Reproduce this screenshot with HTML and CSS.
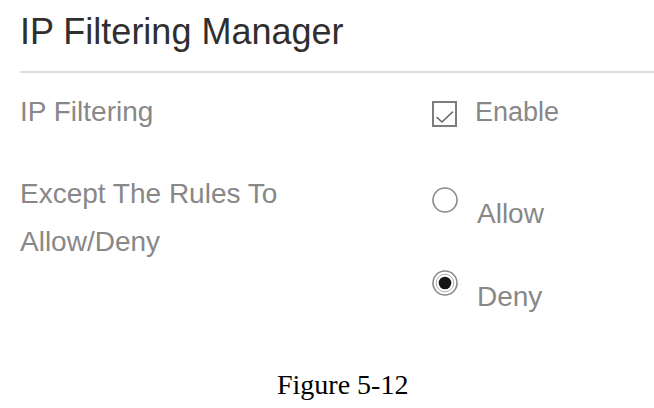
FILE: index.html
```html
<!DOCTYPE html>
<html lang="en">
<head>
<meta charset="utf-8">
<title>IP Filtering Manager</title>
<link rel="stylesheet" href="styles.css">
</head>
<body>
<main class="panel">
  <h1 class="title">IP Filtering Manager</h1>
  <div class="divider"></div>
  <div class="form">
    <div class="label">IP Filtering</div>
    <div class="control check-row">
      <svg class="checkbox" width="25" height="26" viewBox="0 0 25 26" aria-hidden="true">
        <rect x="1" y="1" width="23" height="24" fill="#fff" stroke="#7d7d7d" stroke-width="2"/>
        <path d="M5 16.5 L10 21 L20.5 11" fill="none" stroke="#606060" stroke-width="1.5" stroke-linecap="round" stroke-linejoin="round"/>
      </svg>
      <span class="opt-text">Enable</span>
    </div>

    <div class="label">Except The Rules To<br>Allow/Deny</div>
    <div class="control radio-list">
      <div class="radio-opt">
        <svg class="radio" width="26" height="26" viewBox="0 0 26 26" aria-hidden="true">
          <circle cx="13" cy="13" r="12" fill="#fff" stroke="#8a8a8a" stroke-width="1.6"/>
        </svg>
        <span class="opt-text radio-text">Allow</span>
      </div>
      <div class="radio-opt">
        <svg class="radio" width="26" height="26" viewBox="0 0 26 26" aria-hidden="true">
          <circle cx="13" cy="13" r="12" fill="#fff" stroke="#8a8a8a" stroke-width="1.6"/>
          <circle cx="13" cy="13" r="8.8" fill="none" stroke="#b0b0b0" stroke-width="1"/>
          <circle cx="13" cy="13" r="6.3" fill="#151515"/>
        </svg>
        <span class="opt-text radio-text">Deny</span>
      </div>
    </div>
  </div>
  <p class="caption">Figure 5-12</p>
</main>
</body>
</html>
```

FILE: styles.css
```css
html, body {
  margin: 0;
  padding: 0;
  background: #fff;
}

.panel {
  padding: 10px 0 0 20px;
  font-family: "Liberation Sans", Arial, sans-serif;
}

.title {
  margin: 0;
  font-size: 36px;
  line-height: 44px;
  font-weight: normal;
  color: #2f2f2f;
}

.divider {
  margin-top: 17px;
  height: 2px;
  background: #dddddd;
}

.form {
  margin-top: 15px;
  display: grid;
  grid-template-columns: 412px 1fr;
  row-gap: 34px;
}

.label {
  font-size: 28px;
  line-height: 48px;
  color: #888888;
}

.check-row {
  display: flex;
  align-items: flex-start;
  gap: 18px;
}

.checkbox {
  margin-top: 13px;
  flex: none;
}

.opt-text {
  font-size: 27px;
  line-height: 48px;
  color: #888888;
}

.radio-list {
  display: flex;
  flex-direction: column;
  gap: 40px;
  padding-top: 17px;
}

.radio-opt {
  display: flex;
  align-items: flex-start;
  gap: 19px;
}

.radio {
  flex: none;
}

.radio-text {
  font-size: 28px;
  line-height: 32px;
  padding-top: 11px;
}

.caption {
  margin: 56px 0 0 0;
  padding-left: 257px;
  font-family: "Liberation Serif", "Times New Roman", serif;
  font-size: 28px;
  line-height: 32px;
  color: #000;
}
```
